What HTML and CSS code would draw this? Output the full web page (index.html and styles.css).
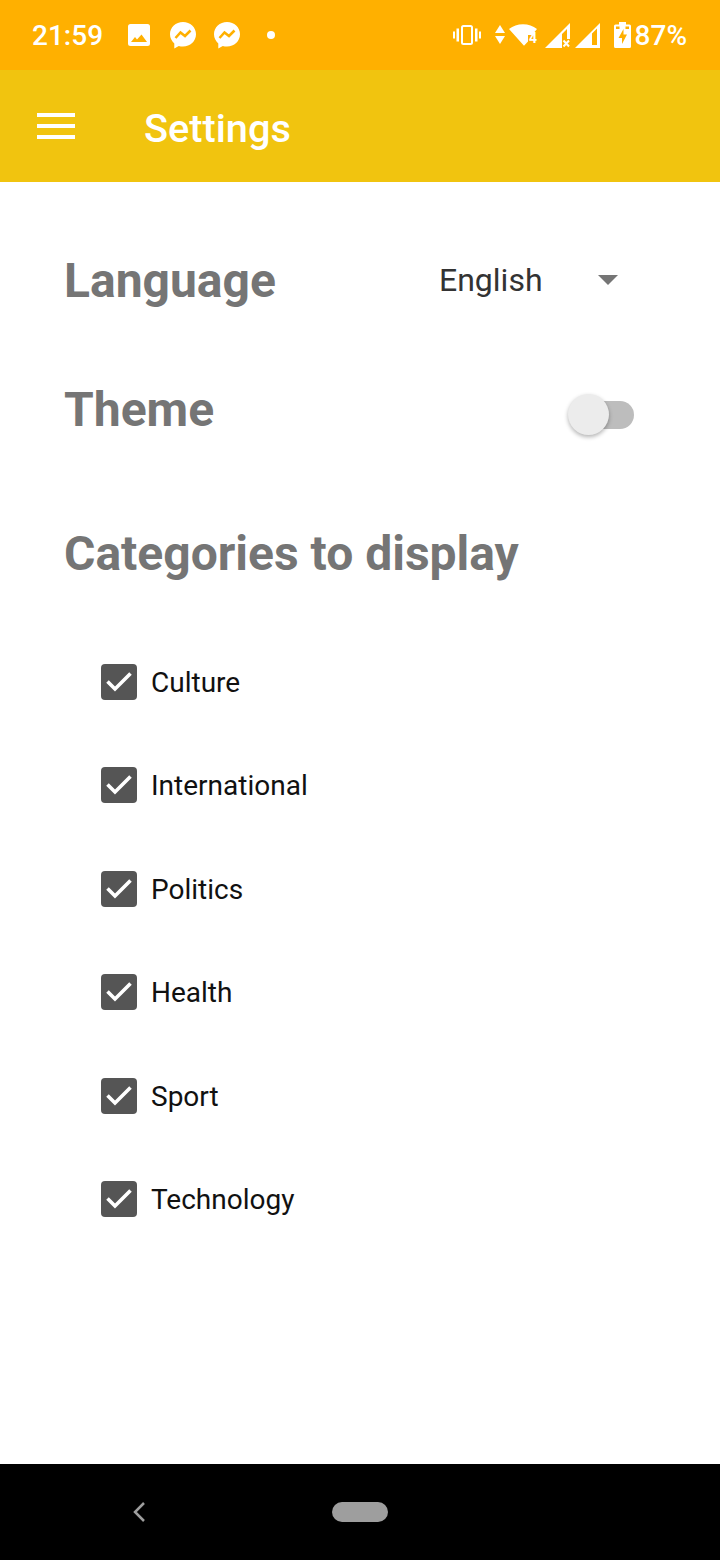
FILE: index.html
```html
<!DOCTYPE html>
<html lang="en">
<head>
    <meta charset="UTF-8">
    <meta name="viewport" content="width=device-width, initial-scale=1.0">
    <title>Settings</title>
    <link rel="stylesheet" href="styles.css">
</head>
<body>
    <div class="screen">
        <div class="status-bar">
            <span class="clock">21:59</span>
            <svg class="st-icon st-image" viewBox="0 0 22 22"><path fill="#fff" fill-rule="evenodd" d="M2.500 0h17A2.500 2.500 0 0 1 22 2.500v17a2.500 2.500 0 0 1-2.500 2.500h-17A2.500 2.500 0 0 1 0 19.500v-17A2.500 2.500 0 0 1 2.500 0zM3 18h16l-5.500-7.500-4.500 5-2-2.500z"/></svg>
            <svg class="st-icon st-mess" viewBox="0 0 26 27"><path fill="#fff" d="M13 0C5.800 0 0 5.400 0 12.300c0 3.700 1.700 6.900 4.300 9.100V26.500l4.500-2.500c1.300.4 2.700.6 4.200.6 7.200 0 13-5.400 13-12.300S20.200 0 13 0z"/><path fill="none" stroke="#ffb000" stroke-width="2.500" d="M5.500 16 10.500 10.500 15 14 20.500 8.500"/></svg>
            <svg class="st-icon st-mess" viewBox="0 0 26 27"><path fill="#fff" d="M13 0C5.800 0 0 5.400 0 12.300c0 3.700 1.700 6.900 4.300 9.100V26.500l4.500-2.500c1.300.4 2.700.6 4.200.6 7.200 0 13-5.400 13-12.300S20.200 0 13 0z"/><path fill="none" stroke="#ffb000" stroke-width="2.500" d="M5.500 16 10.500 10.500 15 14 20.500 8.500"/></svg>
            <span class="st-dot"></span>
            <div class="status-right">
                <svg class="st-vibrate" viewBox="0 0 28 20"><path fill="#fff" d="M0 6.500h2v7H0zM3.500 3.500H6v13H3.500zM22 3.500h2.500v13H22zM26 6.500h2v7h-2z"/><rect x="9" y="1" width="10" height="18" rx="1.500" fill="none" stroke="#fff" stroke-width="2"/></svg>
                <svg class="st-updown" viewBox="0 0 10 19"><path fill="#fff" d="M5 0l5 8H0zM5 19L0 11h10z"/></svg>
                <svg class="st-wifi" viewBox="0 0 28 26"><path fill="#fff" d="M15 23.700 0 7Q6 2.300 14 2.300T28 7L23 13H19V19.500z"/><text x="20" y="21" class="st-wifi-four">4</text></svg>
                <svg class="st-signal" viewBox="0 0 25 25"><path fill="#fff" d="M0 25 25 0V16H22V6L17 11V25z"/><path fill="none" stroke="#fff" stroke-width="2" d="M18.500 17.500l5.500 6M24 17.500l-5.500 6"/></svg>
                <svg class="st-signal st-signal-full" viewBox="0 0 25 25"><path fill="#fff" fill-rule="evenodd" d="M0 25 25 0v25zM17 10.500V22h5V5.500z"/></svg>
                <svg class="st-battery" viewBox="0 0 17 26"><path fill="#fff" d="M5 0h7v2.500h3.500A1.500 1.500 0 0 1 17 4v20.500a1.500 1.500 0 0 1-1.500 1.500h-14A1.500 1.500 0 0 1 0 24.500V4a1.500 1.500 0 0 1 1.500-1.500H5z"/><path fill="#ffb000" d="M9.500 7 4.500 16H8v6l5-9.500H9.500z"/><path fill="#ffb000" d="M2 4.500h3.500V7H2zM11.500 4.500H15V7h-3.500z"/></svg>
                <span class="battery-text">87%</span>
            </div>
        </div>

        <header class="app-bar">
            <div class="menu-icon"><span></span><span></span><span></span></div>
            <h1>Settings</h1>
        </header>

        <main class="content">
            <div class="setting-row row-language">
                <h2>Language</h2>
                <div class="dropdown">
                    <span>English</span>
                    <span class="caret"></span>
                </div>
            </div>
            <div class="setting-row row-theme">
                <h2>Theme</h2>
                <div class="switch"><span class="switch-thumb"></span></div>
            </div>
            <h2 class="categories-title">Categories to display</h2>
            <ul class="categories">
                <li><span class="checkbox"><svg viewBox="0 0 36 36"><path d="M6.500 17.500 14 25 29.500 9.500"/></svg></span>Culture</li>
                <li><span class="checkbox"><svg viewBox="0 0 36 36"><path d="M6.500 17.500 14 25 29.500 9.500"/></svg></span>International</li>
                <li><span class="checkbox"><svg viewBox="0 0 36 36"><path d="M6.500 17.500 14 25 29.500 9.500"/></svg></span>Politics</li>
                <li><span class="checkbox"><svg viewBox="0 0 36 36"><path d="M6.500 17.500 14 25 29.500 9.500"/></svg></span>Health</li>
                <li><span class="checkbox"><svg viewBox="0 0 36 36"><path d="M6.500 17.500 14 25 29.500 9.500"/></svg></span>Sport</li>
                <li><span class="checkbox"><svg viewBox="0 0 36 36"><path d="M6.500 17.500 14 25 29.500 9.500"/></svg></span>Technology</li>
            </ul>
        </main>

        <div class="nav-bar">
            <svg class="nav-back" viewBox="0 0 12 20"><path d="M11 1 2 10l9 9"/></svg>
            <span class="nav-pill"></span>
        </div>
    </div>
</body>
</html>
```

FILE: styles.css
```css
* {
    box-sizing: border-box;
}
body {
    font-family: Roboto, sans-serif;
    margin: 0;
    padding: 0;
    background-color: white;
}
.screen {
    width: 720px;
    height: 1560px;
    display: flex;
    flex-direction: column;
    overflow: hidden;
}
.status-bar {
    height: 70px;
    flex: none;
    background-color: #ffb000;
    color: white;
    display: flex;
    align-items: center;
    padding-left: 32px;
}
.clock {
    font-size: 28px;
    font-weight: 500;
    width: 96px;
}
.st-icon {
    display: block;
}
.st-image {
    width: 22px;
    height: 22px;
    margin-right: 20px;
}
.st-mess {
    width: 26px;
    height: 27px;
    margin-right: 18px;
    margin-top: 1px;
}
.st-dot {
    width: 8px;
    height: 8px;
    border-radius: 50%;
    background-color: white;
    margin-left: 9px;
}
.status-right {
    margin-left: auto;
    display: flex;
    align-items: center;
    padding-right: 33px;
}
.st-vibrate {
    width: 28px;
    height: 20px;
    margin-right: 14px;
}
.st-updown {
    width: 10px;
    height: 19px;
    margin-right: 4px;
    margin-top: -1px;
}
.st-wifi {
    width: 28px;
    height: 26px;
    margin-right: 8px;
}
.st-wifi-four {
    font-family: Roboto, sans-serif;
    font-size: 14px;
    font-weight: 700;
    fill: white;
}
.st-signal {
    width: 25px;
    height: 25px;
    margin-right: 5px;
    margin-top: 1px;
}
.st-signal-full {
    margin-right: 14px;
}
.st-battery {
    width: 17px;
    height: 26px;
    margin-right: 4px;
}
.battery-text {
    font-size: 28px;
    font-weight: 500;
}
.app-bar {
    height: 112px;
    flex: none;
    background-color: #f1c40f;
    display: flex;
    align-items: center;
    padding-left: 37px;
}
.app-bar h1 {
    margin: 4px 0 0 69px;
    color: white;
    font-size: 39.7px;
    font-weight: 500;
}
.menu-icon {
    width: 38px;
    display: flex;
    flex-direction: column;
    gap: 7px;
}
.menu-icon span {
    display: block;
    height: 4px;
    background-color: white;
}
.content {
    flex: 1;
    padding: 0 65px 0 64px;
    color: #757575;
}
.content h2 {
    margin: 0;
    font-size: 48px;
    font-weight: 700;
    color: #757575;
}
.setting-row {
    display: flex;
    align-items: center;
    justify-content: space-between;
}
.row-language {
    margin-top: 68px;
    height: 60px;
}
.row-theme {
    margin-top: 69px;
    height: 60px;
}
.dropdown {
    width: 179px;
    display: flex;
    align-items: center;
    justify-content: space-between;
    font-size: 32px;
    color: #333;
    margin-right: 37px;
}
.caret {
    width: 0;
    height: 0;
    border-left: 10px solid transparent;
    border-right: 10px solid transparent;
    border-top: 10px solid #757575;
}
.switch {
    position: relative;
    width: 52px;
    height: 28px;
    margin-right: 21px;
    margin-top: 12px;
    border-radius: 14px;
    background-color: #bdbdbd;
}
.switch-thumb {
    position: absolute;
    left: -14px;
    top: -7px;
    width: 41px;
    height: 41px;
    border-radius: 50%;
    background-color: #ececec;
    box-shadow: 0 2px 4px rgba(0, 0, 0, 0.3);
}
.content .categories-title {
    margin-top: 85px;
    height: 60px;
    line-height: 60px;
}
.categories {
    list-style: none;
    margin: 80px 0 0 37px;
    padding: 0;
    display: flex;
    flex-direction: column;
    gap: 67.4px;
}
.categories li {
    display: flex;
    align-items: flex-start;
    height: 36px;
    line-height: 38px;
    font-size: 28px;
    color: #111;
}
.checkbox {
    width: 36px;
    height: 36px;
    flex: none;
    margin-right: 14px;
    border-radius: 4px;
    background-color: #555;
}
.checkbox svg {
    display: block;
    width: 36px;
    height: 36px;
    fill: none;
    stroke: white;
    stroke-width: 3.6;
}
.nav-bar {
    height: 96px;
    flex: none;
    background-color: black;
    display: flex;
    align-items: center;
    padding-left: 132px;
}
.nav-back {
    width: 14px;
    height: 20px;
    fill: none;
    stroke: #9e9e9e;
    stroke-width: 2.5;
}
.nav-pill {
    width: 56px;
    height: 20px;
    margin-left: 186px;
    border-radius: 10px;
    background-color: #9e9e9e;
}
```
